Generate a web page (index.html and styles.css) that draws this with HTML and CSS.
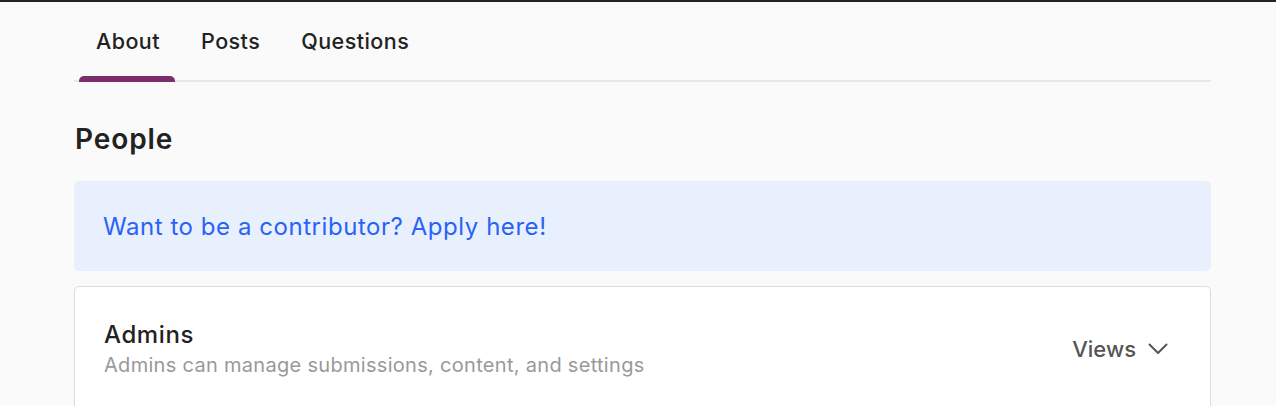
FILE: index.html
```html
<!DOCTYPE html>
<html>
<head>
<meta charset="utf-8">
<link rel="stylesheet" href="styles.css">
</head>
<body>
<div class="page">
  <nav class="tabs">
    <a class="tab active">About</a>
    <a class="tab">Posts</a>
    <a class="tab">Questions</a>
  </nav>
  <h1 class="title">People</h1>
  <div class="notice"><a class="notice-link">Want to be a contributor? Apply here!</a></div>
  <section class="card">
    <div class="card-head">
      <div class="card-text">
        <div class="card-title">Admins</div>
        <div class="card-sub">Admins can manage submissions, content, and settings</div>
      </div>
      <button class="views">Views
        <svg class="chev" width="20" height="12" viewBox="0 0 20 12"><path d="M1.5 1.5 L10 10 L18.5 1.5" fill="none" stroke="#555" stroke-width="2" stroke-linecap="round" stroke-linejoin="round"/></svg>
      </button>
    </div>
  </section>
</div>
</body>
</html>
```
FILE: styles.css
```css
html, body { margin: 0; padding: 0; }
body {
  background: #fafafa;
  border-top: 2px solid #222;
  font-family: Inter, "Noto Sans", sans-serif;
  color: #222;
  height: 404px;
  overflow: hidden;
}
.page {
  width: 1137px;
  margin-left: 74px;
}
.tabs {
  display: flex;
  gap: 9px;
  height: 78px;
  padding-left: 5px;
  border-bottom: 2px solid #e8e8e8;
}
.tab {
  display: flex;
  align-items: flex-start;
  padding: 26px 15px 0 17px;
  font-size: 21.5px;
  letter-spacing: 0.45px;
  font-weight: 500;
  color: #222;
  position: relative;
}
.tab.active::after {
  content: "";
  position: absolute;
  left: 0; right: 0; bottom: -2px;
  height: 6px;
  background: #7a2e6b;
  border-radius: 5px 5px 0 0;
}
.title {
  margin: 38px 0 0 1px;
  font-size: 28px;
  letter-spacing: 0.9px;
  font-weight: 600;
  line-height: 38px;
  color: #222;
}
.notice {
  margin-top: 23px;
  height: 90px;
  background: #e8f0fe;
  border-radius: 5px;
  display: flex;
  align-items: center;
  padding-left: 29px;
}
.notice-link {
  font-size: 24px;
  letter-spacing: 0.55px;
  color: #2a62f6;
}
.card {
  margin-top: 15px;
  background: #fff;
  border: 1.5px solid #ddd;
  border-radius: 5px;
  height: 200px;
}
.card-head {
  display: flex;
  align-items: center;
  justify-content: space-between;
  padding: 32px 42px 0 29px;
}
.card-title {
  font-size: 24px;
  letter-spacing: 0.6px;
  font-weight: 500;
  line-height: 32px;
  color: #222;
}
.card-sub {
  font-size: 20px;
  letter-spacing: 0.3px;
  color: #999;
  line-height: 28px;
}
.views {
  display: flex;
  align-items: center;
  gap: 12px;
  background: none;
  border: none;
  font-family: inherit;
  font-size: 22px;
  font-weight: 500;
  color: #555;
  padding: 0;
}
```
